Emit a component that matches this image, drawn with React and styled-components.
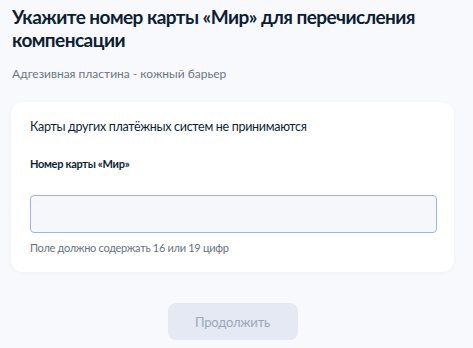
import React from "react";
import styled, { createGlobalStyle } from "styled-components";

const Global = createGlobalStyle`
  html, body { margin: 0; padding: 0; background: #f8f9fd; }
  body { font-family: Lato, "Noto Sans", sans-serif; color: #0b1f33; }
  * { box-sizing: border-box; }
`;

const Page = styled.div`
  width: 473px;
  height: 348px;
  padding: 5px 19px 0 11px;
  display: flex;
  flex-direction: column;
  overflow: hidden;
`;

const Title = styled.h1`
  margin: 0 0 0 1px;
  font-size: 19px;
  line-height: 23px;
  letter-spacing: -0.55px;
  font-weight: 700;
  color: #0b1f33;
`;

const Subtitle = styled.p`
  margin: 15px 0 0 1px;
  font-size: 12px;
  line-height: 16px;
  color: #6b7683;
`;

const Card = styled.section`
  margin-top: 20px;
  background: #ffffff;
  border-radius: 12px;
  box-shadow: 0 1px 4px rgba(11, 31, 51, 0.04);
  padding: 16px 17px 17px 19px;
  display: flex;
  flex-direction: column;
`;

const Note = styled.p`
  margin: 0;
  font-size: 12.5px;
  line-height: 18px;
  letter-spacing: -0.3px;
  color: #0b1f33;
`;

const Label = styled.label`
  margin-top: 20px;
  font-size: 11px;
  line-height: 16px;
  letter-spacing: -0.3px;
  font-weight: 700;
  color: #0b1f33;
`;

const Input = styled.input`
  margin-top: 23px;
  width: 100%;
  height: 38px;
  border: 1px solid #9fb4e8;
  border-radius: 4px;
  background: #f5f7fa;
  outline: none;
  font: inherit;
  padding: 0 12px;
`;

const Hint = styled.span`
  margin-top: 7px;
  font-size: 11px;
  line-height: 15px;
  letter-spacing: -0.3px;
  color: #66727f;
`;

const Footer = styled.div`
  display: flex;
  justify-content: center;
  margin-top: 31px;
`;

const Button = styled.button`
  width: 130px;
  height: 37px;
  border: none;
  border-radius: 8px;
  background: #e4e9f3;
  color: #9ba7b9;
  font-family: Lato, "Noto Sans", sans-serif;
  font-size: 13px;
  letter-spacing: -0.2px;
  cursor: default;
`;

export default function App() {
  return (
    <>
      <Global />
      <Page>
        <Title>Укажите номер карты «Мир» для перечисления компенсации</Title>
        <Subtitle>Адгезивная пластина - кожный барьер</Subtitle>
        <Card>
          <Note>Карты других платёжных систем не принимаются</Note>
          <Label htmlFor="card">Номер карты «Мир»</Label>
          <Input id="card" type="text" />
          <Hint>Поле должно содержать 16 или 19 цифр</Hint>
        </Card>
        <Footer>
          <Button disabled>Продолжить</Button>
        </Footer>
      </Page>
    </>
  );
}
